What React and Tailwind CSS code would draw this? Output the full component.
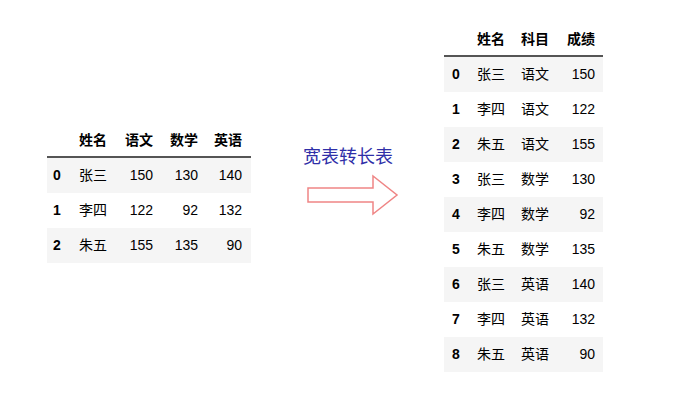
import React from "react";

const font = { fontFamily: '"Liberation Sans", Arial, "Noto Sans CJK SC", sans-serif' };

function Table({ cols, headers, rows, idxPad }) {
  return (
    <div className="flex flex-col text-[14px] text-black" style={font}>
      <div className="flex h-[35px] items-center border-b-2 border-[#555] pt-[2px] font-bold">
        {headers.map((h, i) => (
          <div key={i} className={cols[i] + " text-right"}>
            {h}
          </div>
        ))}
      </div>
      {rows.map((r, ri) => (
        <div
          key={ri}
          className={
            "flex h-[35px] items-center " + (ri % 2 === 0 ? "bg-[#f5f5f5]" : "bg-white")
          }
        >
          {r.map((c, ci) => (
            <div
              key={ci}
              className={
                cols[ci] + (ci === 0 ? " font-bold text-left " + idxPad : " text-right")
              }
            >
              {c}
            </div>
          ))}
        </div>
      ))}
    </div>
  );
}

export default function App() {
  const leftCols = [
    "w-[22px]",
    "w-[45px] pr-[7px]",
    "w-[46px] pr-[7px]",
    "w-[45px] pr-[7px]",
    "w-[46px] pr-[9px]",
  ];
  const leftRows = [
    ["0", "张三", "150", "130", "140"],
    ["1", "李四", "122", "92", "132"],
    ["2", "朱五", "155", "135", "90"],
  ];
  const rightCols = [
    "w-[24px]",
    "w-[44px] pr-[7px]",
    "w-[44px] pr-[7px]",
    "w-[47px] pr-[8px]",
  ];
  const rightRows = [
    ["0", "张三", "语文", "150"],
    ["1", "李四", "语文", "122"],
    ["2", "朱五", "语文", "155"],
    ["3", "张三", "数学", "130"],
    ["4", "李四", "数学", "92"],
    ["5", "朱五", "数学", "135"],
    ["6", "张三", "英语", "140"],
    ["7", "李四", "英语", "132"],
    ["8", "朱五", "英语", "90"],
  ];
  return (
    <div className="w-[682px] h-[400px] bg-white flex items-start overflow-hidden">
      <div className="ml-[47px] mt-[123px] w-[204px]">
        <Table
          cols={leftCols}
          headers={["", "姓名", "语文", "数学", "英语"]}
          rows={leftRows}
          idxPad="pl-[6px]"
        />
      </div>
      <div className="ml-[49px] mt-[143px] w-[100px] flex flex-col">
        <div
          className="pl-[3px] text-[18px] leading-[24px] text-[#2f2fa8]"
          style={{ fontFamily: '"Noto Sans CJK SC", sans-serif' }}
        >
          宽表转长表
        </div>
        <svg width="100" height="46" viewBox="0 0 100 46" className="mt-[5px]">
          <polygon
            points="8,16 73,16 73,4 97,23 73,42 73,30 8,30"
            fill="#ffffff"
            stroke="#ef8585"
            strokeWidth="1.5"
          />
        </svg>
      </div>
      <div className="ml-[44px] mt-[22px] w-[159px]">
        <Table
          cols={rightCols}
          headers={["", "姓名", "科目", "成绩"]}
          rows={rightRows}
          idxPad="pl-[8px]"
        />
      </div>
    </div>
  );
}
